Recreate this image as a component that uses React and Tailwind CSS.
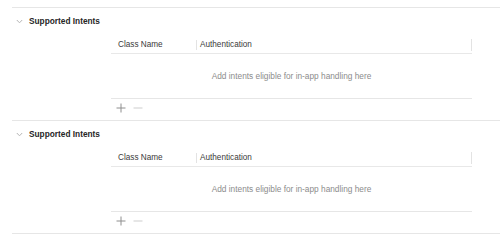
import React from "react";

function Chevron() {
  return (
    <svg width="7" height="5" viewBox="0 0 7 5" className="block">
      <path d="M0.8 1 L3.5 3.8 L6.2 1" fill="none" stroke="#b5b5b5" strokeWidth="1" />
    </svg>
  );
}

function Section() {
  return (
    <div className="border-t border-[#e6e6e6] ml-[12px]">
      <div className="h-[26px] flex items-center">
        <div className="w-[11px] flex justify-end">
          <Chevron />
        </div>
        <span className="ml-[6px] text-[8.3px] font-bold text-[#262626]">Supported Intents</span>
      </div>
      <div className="ml-[99px] w-[361px]">
        <div className="h-[20px] pt-[3px] flex items-center border-b border-[#e8e8e8] text-[8.2px] text-[#3a3a3a]">
          <div className="w-[85px] pl-[7px]">Class Name</div>
          <div className="w-px h-[10px] bg-[#e3e3e3]"></div>
          <div className="flex-1 pl-[3px]">Authentication</div>
          <div className="w-px h-[12px] bg-[#e3e3e3]"></div>
        </div>
        <div className="h-[45px] flex items-center justify-center border-b border-[#e6e6e6] text-[8.3px] text-[#8c8c8c]">
          Add intents eligible for in-app handling here
        </div>
        <div className="h-[21px] flex items-start pt-[4px] pl-[5px] gap-[7px]">
          <svg width="10" height="10" viewBox="0 0 10 10" className="block">
            <path d="M5 0.5 V9.5 M0.5 5 H9.5" stroke="#8e8e8e" strokeWidth="1" />
          </svg>
          <svg width="10" height="10" viewBox="0 0 10 10" className="block">
            <path d="M0.5 5 H9.5" stroke="#cdcdcd" strokeWidth="1" />
          </svg>
        </div>
      </div>
    </div>
  );
}

export default function App() {
  return (
    <div className="w-[500px] h-[240px] bg-white pt-[7px] overflow-hidden" style={{ fontFamily: '"Liberation Sans", Arial, sans-serif' }}>
      <Section />
      <Section />
      <div className="border-t border-[#e6e6e6] ml-[12px]"></div>
    </div>
  );
}
